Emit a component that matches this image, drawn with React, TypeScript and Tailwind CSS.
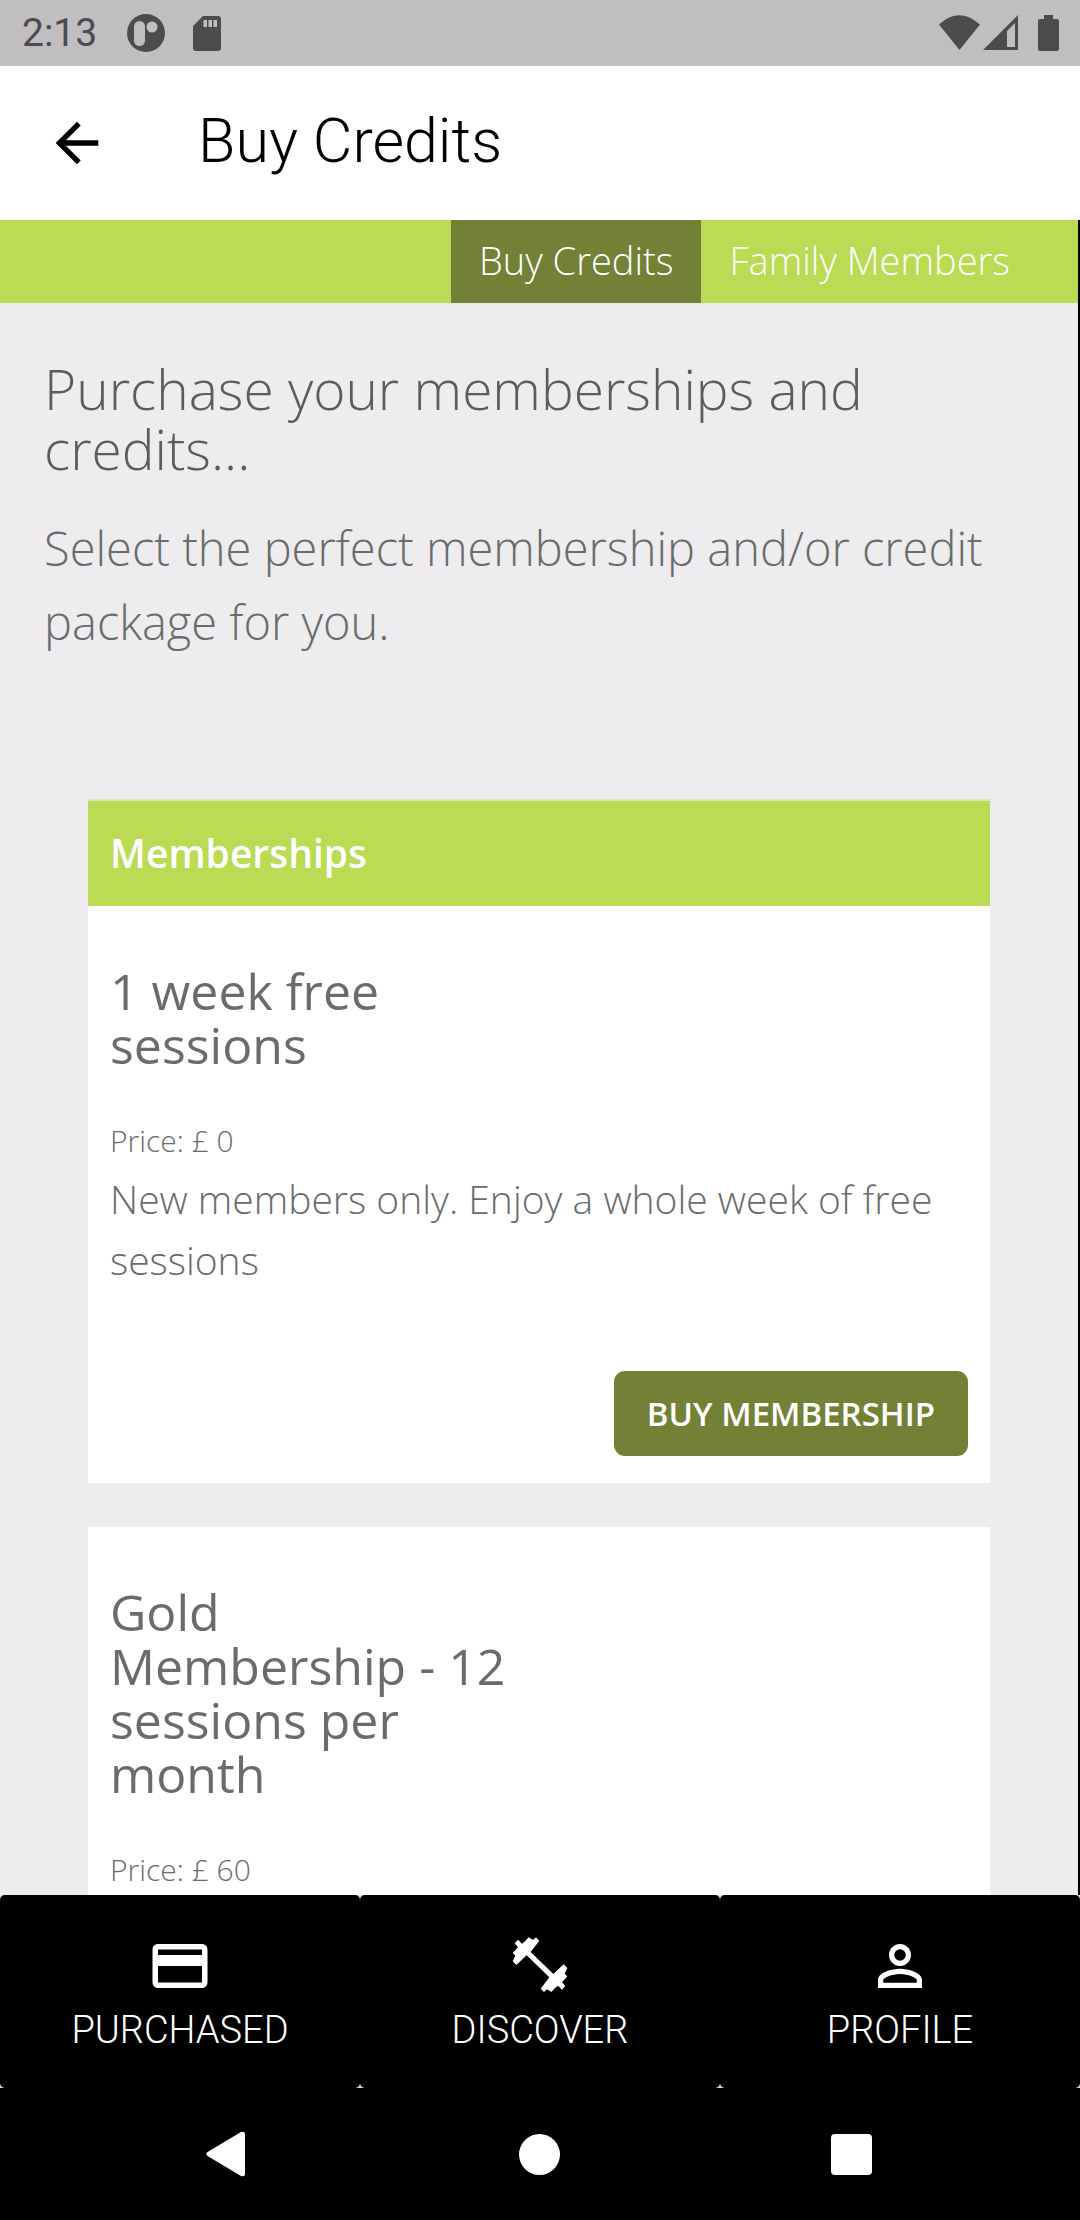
import type { ReactNode } from "react";

// ─── Data ───────────────────────────────────────────────────────

const TABS = [
  { label: "Buy Credits", active: true },
  { label: "Family Members", active: false },
];

interface Membership {
  title: string;
  price: string;
  description?: string;
}

const MEMBERSHIPS: Membership[] = [
  {
    title: "1 week free sessions",
    price: "Price: £ 0",
    description: "New members only. Enjoy a whole week of free sessions",
  },
  {
    title: "Gold Membership - 12 sessions per month",
    price: "Price: £ 60",
  },
];

// ─── Icons ──────────────────────────────────────────────────────

function DumbbellIcon() {
  return (
    <svg viewBox="21 27 198 198" className="size-[66px]" fill="currentColor" aria-hidden="true">
      <path d="M92 84 118 50 108 40 99 48 86 40 75 52 66 59 54 47 44 58 54 69 47 77 38 87 46 95 38 112 49 123 80 94 148 160 122 194 132 204 141 196 154 204 165 192 174 185 186 197 196 186 186 175 193 167 202 157 194 149 202 132 191 121 160 150Z" />
    </svg>
  );
}

const NAV_ITEMS: { label: string; icon: ReactNode }[] = [
  {
    label: "PURCHASED",
    icon: (
      <svg viewBox="0 0 24 24" className="size-[66px]" fill="currentColor" aria-hidden="true">
        <path d="M20 4H4c-1.11 0-1.99.89-1.99 2L2 18c0 1.11.89 2 2 2h16c1.11 0 2-.89 2-2V6c0-1.11-.89-2-2-2zm0 14H4v-6h16v6zm0-10H4V6h16v2z" />
      </svg>
    ),
  },
  { label: "DISCOVER", icon: <DumbbellIcon /> },
  {
    label: "PROFILE",
    icon: (
      <svg viewBox="0 0 24 24" className="size-[66px]" fill="currentColor" aria-hidden="true">
        <path d="M12 5.9a2.1 2.1 0 1 1 0 4.2 2.1 2.1 0 0 1 0-4.2m0 9c2.97 0 6.1 1.46 6.1 2.1v1.1H5.9V17c0-.64 3.13-2.1 6.1-2.1M12 4C9.79 4 8 5.79 8 8s1.79 4 4 4 4-1.79 4-4-1.79-4-4-4zm0 9c-2.67 0-8 1.34-8 4v3h16v-3c0-2.66-5.33-4-8-4z" />
      </svg>
    ),
  },
];

// ─── Sections ───────────────────────────────────────────────────

function StatusBar() {
  return (
    <div className="flex h-[66px] shrink-0 items-center bg-[#c1bec2] pr-[21px] pl-[22px] text-[#4d4b4e]">
      <span className="text-[39px] leading-[66px]">2:13</span>
      <svg viewBox="0 0 38 38" className="ml-[30px] size-[38px]" aria-hidden="true">
        <circle cx="19" cy="19" r="19" fill="currentColor" />
        <rect x="7" y="7" width="11" height="25" rx="5.5" fill="#c1bec2" />
        <circle cx="25" cy="13" r="5.5" fill="#c1bec2" />
      </svg>
      <svg viewBox="0 0 28 35" className="ml-7 h-[35px] w-7" aria-hidden="true">
        <path d="M10 0H25a3 3 0 0 1 3 3V32a3 3 0 0 1-3 3H3a3 3 0 0 1-3-3V10Z" fill="currentColor" />
        <path d="M10.500 4h3.500v7h-3.500zM15.500 4h3.500v7h-3.500zM20.500 4h3.500v7h-3.500z" fill="#c1bec2" />
      </svg>
      <svg viewBox="0 0 120 36" className="ml-auto h-9 w-[120px]" fill="currentColor" aria-hidden="true">
        <path d="M0 9.500Q20-9 41 9.500L20.500 35Z" />
        <path fillRule="evenodd" d="M44 35 79 0V35ZM68 16V32H76V8Z" />
        <path d="M105 0h9v4h4a2 2 0 0 1 2 2V34a2 2 0 0 1-2 2H101a2 2 0 0 1-2-2V6a2 2 0 0 1 2-2h4z" />
      </svg>
    </div>
  );
}

function Header() {
  return (
    <header className="flex h-[154px] shrink-0 items-center bg-white pl-[45px] text-black">
      <button type="button" aria-label="Back">
        <svg viewBox="0 0 24 24" className="size-16" fill="currentColor" aria-hidden="true">
          <path d="M20 11H7.830l5.590-5.590L12 4l-8 8 8 8 1.410-1.410L7.830 13H20v-2z" />
        </svg>
      </button>
      <h1 className="ml-[89px] pb-0.5 text-[61px] font-light">Buy Credits</h1>
    </header>
  );
}

function MembershipCard({ title, price, description }: Membership) {
  return (
    <article className="bg-white px-[22px] pt-[58px] pb-[27px]">
      <h3 className="w-[400px] text-[50px] leading-[54px]">{title}</h3>
      <p className="mt-11 text-[30px] leading-[50px] font-light">{price}</p>
      {description && (
        <>
          <p className="mt-0.5 text-[39px] leading-[61px] font-light">{description}</p>
          <div className="mt-[81px] flex justify-end">
            <button
              type="button"
              className="h-[85px] rounded-[11px] bg-[#728136] px-[33px] text-[33px] font-semibold text-white"
            >
              BUY MEMBERSHIP
            </button>
          </div>
        </>
      )}
    </article>
  );
}

function BottomNav() {
  return (
    <nav className="flex h-[193px] shrink-0 bg-[#dddddd]">
      {NAV_ITEMS.map(({ label, icon }) => (
        <button
          key={label}
          type="button"
          className="flex flex-1 flex-col items-center rounded-[5px] bg-black pt-[38px] text-white"
        >
          {icon}
          <span className="mt-2 text-[38px] leading-[46px] font-light">{label}</span>
        </button>
      ))}
    </nav>
  );
}

function SystemNav() {
  return (
    <div className="flex h-[132px] shrink-0 items-center justify-between bg-black pr-[208px] pl-[206px] text-white">
      <button type="button" aria-label="System back">
        <svg viewBox="0 0 42 46" className="h-[46px] w-[42px]" fill="currentColor" aria-hidden="true">
          <path d="M1.500 21 35 1Q39 0 39 3V43Q39 46 35 45L1.500 25Q-1 23 1.500 21Z" />
        </svg>
      </button>
      <button type="button" aria-label="Home" className="size-[41px] rounded-full bg-white" />
      <button type="button" aria-label="Recent apps" className="size-[41px] rounded bg-white" />
    </div>
  );
}

// ─── Page ───────────────────────────────────────────────────────

export default function App() {
  return (
    <div className="flex h-screen flex-col overflow-hidden bg-black font-['Roboto',sans-serif]">
      <StatusBar />
      <Header />

      <main className="mr-[2px] min-h-0 flex-1 overflow-hidden bg-[#eeecef] font-['Open_Sans',sans-serif] text-[#696c6d]">
        <div className="flex justify-end bg-[#badb53] pr-10">
          {TABS.map(({ label, active }) => (
            <a
              key={label}
              href="#"
              className={`px-7 pb-0.5 text-[38px] leading-[81px] font-light text-white ${active ? "bg-[#728136]" : ""}`}
            >
              {label}
            </a>
          ))}
        </div>

        <div className="px-11 pt-14">
          <h2 className="text-[55px] leading-[60px] font-light text-[#5c5b5e]">
            Purchase your memberships and credits...
          </h2>
          <p className="mt-8 text-[47px] leading-[74px] font-light">
            Select the perfect membership and/or credit package for you.
          </p>

          <section className="mx-11 mt-[140px]">
            <h2 className="border-t-2 border-[#d9e5bb] bg-[#badb53] px-[22px] pb-0.5 text-[39px] leading-[103px] font-semibold text-white">
              Memberships
            </h2>
            <div className="flex flex-col gap-11">
              {MEMBERSHIPS.map((item) => (
                <MembershipCard key={item.title} {...item} />
              ))}
            </div>
          </section>
        </div>
      </main>

      <BottomNav />
      <SystemNav />
    </div>
  );
}
